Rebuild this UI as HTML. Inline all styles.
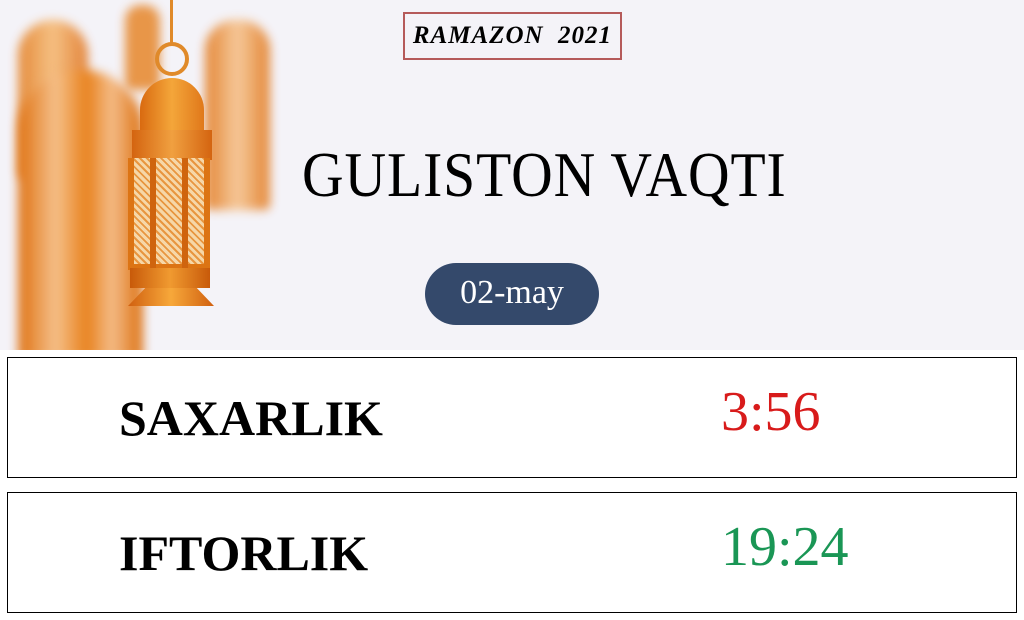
<!DOCTYPE html>
<html><head><meta charset="utf-8"><style>
*{margin:0;padding:0;box-sizing:border-box}
body{width:1024px;height:620px;background:#fff;position:relative;overflow:hidden;font-family:"Liberation Serif",serif}
.hdr{position:absolute;left:0;top:0;width:1024px;height:350px;background:#f4f3f8;overflow:hidden}
.b{position:absolute;filter:blur(5px)}
.tag{position:absolute;left:403px;top:12px;width:219px;height:48px;border:2px solid #b55a5a;font-style:italic;font-weight:bold;font-size:25px;line-height:44px;text-align:center;letter-spacing:1px}
.title{position:absolute;left:302px;top:138px;font-size:64px;white-space:nowrap;transform:scaleX(0.9);transform-origin:left top;letter-spacing:1px}
.pill{position:absolute;left:425px;top:263px;width:174px;height:62px;border-radius:31px;background:#34496b;color:#fff;font-size:34px;line-height:60px;text-align:center}
.box{position:absolute;left:7px;width:1010px;height:121px;border:1.5px solid #000;background:#fff}
.lab{position:absolute;left:111px;font-weight:bold;font-size:50px;top:31px}
.tm{position:absolute;font-size:56px;top:22px}
</style></head><body>
<div class="hdr">
  <div class="b" style="left:18px;top:20px;width:70px;height:160px;background:linear-gradient(90deg,#e27818,#f6b870,#e07018);border-radius:35px 35px 8px 8px;opacity:.85"></div>
  <div class="b" style="left:125px;top:5px;width:35px;height:85px;background:#e6862a;border-radius:15px 15px 4px 4px;opacity:.85"></div>
  <div class="b" style="left:205px;top:20px;width:65px;height:190px;background:linear-gradient(90deg,#e27a20,#f6c490,#e27a20);border-radius:30px 30px 6px 6px;opacity:.9"></div>
  <div class="b" style="left:18px;top:70px;width:125px;height:290px;background:linear-gradient(90deg,#de7010,#f5c08a 30%,#e8821e 55%,#f4bc88 75%,#dc7010);border-radius:60px 60px 0 0"></div>
  <div style="position:absolute;left:170px;top:0;width:3px;height:45px;background:#e08a2a"></div>
  <div style="position:absolute;left:155px;top:42px;width:34px;height:34px;border:4px solid #e08a2a;border-radius:50%"></div>
  <div style="position:absolute;left:140px;top:78px;width:64px;height:55px;background:linear-gradient(90deg,#d96a10,#f4a63a,#e0781a);border-radius:32px 32px 0 0"></div>
  <div style="position:absolute;left:132px;top:130px;width:80px;height:30px;background:linear-gradient(90deg,#d46410,#f0a040,#d46410)"></div>
  <div style="position:absolute;left:128px;top:158px;width:82px;height:112px;background:repeating-linear-gradient(45deg,#f6d7a8 0 3px,#e89640 3px 5px);border:6px solid #dc7414;border-top:0"></div>
  <div style="position:absolute;left:150px;top:158px;width:6px;height:112px;background:#cf640e"></div>
  <div style="position:absolute;left:182px;top:158px;width:6px;height:112px;background:#cf640e"></div>
  <div style="position:absolute;left:130px;top:268px;width:80px;height:20px;background:linear-gradient(90deg,#c85a0a,#f09a30,#c85a0a)"></div>
  <div style="position:absolute;left:128px;top:288px;width:86px;height:18px;background:linear-gradient(90deg,#d06010,#f7a83a,#d06010);clip-path:polygon(20% 0,80% 0,100% 100%,0 100%)"></div>
  <div class="tag">RAMAZON&nbsp; 2021</div>
  <div class="title">GULISTON VAQTI</div>
  <div class="pill">02-may</div>
</div>
<div class="box" style="top:357px"><div class="lab">SAXARLIK</div><div class="tm" style="left:713px;color:#d81b1b">3:56</div></div>
<div class="box" style="top:492px"><div class="lab">IFTORLIK</div><div class="tm" style="left:713px;color:#1a9655">19:24</div></div>
</body></html>
